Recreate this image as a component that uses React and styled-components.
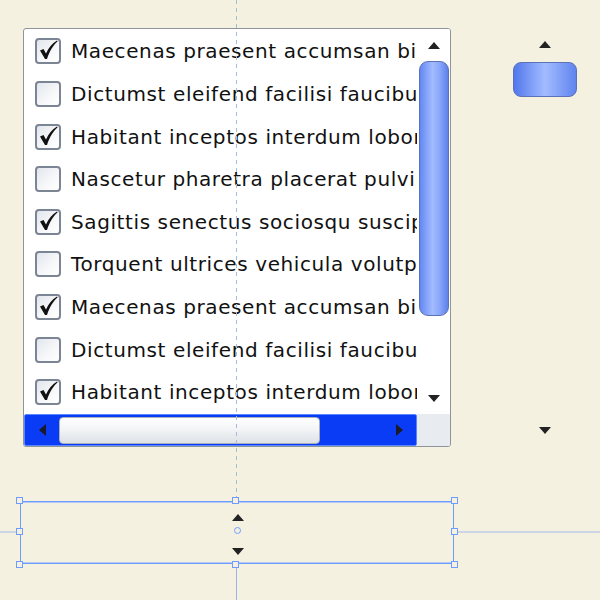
import styled, { createGlobalStyle } from "styled-components";

const GlobalStyle = createGlobalStyle`
  html, body {
    margin: 0;
    padding: 0;
    background: #f5f1e1;
  }
  * {
    box-sizing: border-box;
  }
`;

const items = [
  { label: "Maecenas praesent accumsan bibendum", checked: true },
  { label: "Dictumst eleifend facilisi faucibus", checked: false },
  { label: "Habitant inceptos interdum lobortis", checked: true },
  { label: "Nascetur pharetra placerat pulvinar", checked: false },
  { label: "Sagittis senectus sociosqu suscipit", checked: true },
  { label: "Torquent ultrices vehicula volutpat", checked: false },
  { label: "Maecenas praesent accumsan bibendum", checked: true },
  { label: "Dictumst eleifend facilisi faucibus", checked: false },
  { label: "Habitant inceptos interdum lobortis", checked: true },
];

const Check = () => (
  <svg width="22" height="22" viewBox="0 0 22 22">
    <path
      d="M3 11.5 L6.5 10 L9 14.5 C11.5 9 15 4.5 20 1.5 L20.5 2.5 C16 6.5 12.5 12 10 20 L8 20 Z"
      fill="#111"
    />
  </svg>
);

const App = () => {
  return (
    <Canvas>
      <GlobalStyle />
      <TopRow>
        <ListBox>
          <List>
            {items.map((item, i) => (
              <Row key={i}>
                <Box>{item.checked && <Check />}</Box>
                <Label>{item.label}</Label>
              </Row>
            ))}
          </List>
          <VScroll>
            <ArrowCell>
              <Arrow dir="up" />
            </ArrowCell>
            <VThumb />
            <Spacer />
            <ArrowCell>
              <Arrow dir="down" />
            </ArrowCell>
          </VScroll>
          <HScroll>
            <ArrowCell>
              <Arrow dir="left" />
            </ArrowCell>
            <HThumb />
            <Spacer />
            <ArrowCell>
              <Arrow dir="right" />
            </ArrowCell>
          </HScroll>
          <Corner />
        </ListBox>

        <LoneScroll>
          <ArrowCell>
            <Arrow dir="up" />
          </ArrowCell>
          <LoneThumb />
          <Spacer />
          <ArrowCell>
            <Arrow dir="down" />
          </ArrowCell>
        </LoneScroll>
      </TopRow>

      <Selection>
        <Handle pos="tl" />
        <Handle pos="tm" />
        <Handle pos="tr" />
        <Handle pos="ml" />
        <Handle pos="mr" />
        <Handle pos="bl" />
        <Handle pos="bm" />
        <Handle pos="br" />
        <Spinner>
          <Arrow dir="up" />
          <Pivot />
          <Arrow dir="down" />
        </Spinner>
      </Selection>

      <GuideDashed />
      <GuideBottom />
      <GuideLeft />
      <GuideRight />
    </Canvas>
  );
};
export default App;

const Canvas = styled.div`
  position: relative;
  width: 600px;
  height: 600px;
  overflow: hidden;
  background: #f5f1e1;
  font-family: "DejaVu Sans", Verdana, sans-serif;
`;

const TopRow = styled.div`
  display: flex;
  align-items: flex-start;
  padding: 28px 0 0 23px;
`;

const ListBox = styled.div`
  width: 428px;
  height: 419px;
  display: grid;
  grid-template-columns: 1fr 33px;
  grid-template-rows: 1fr 32px;
  background: #fff;
  border: 1px solid #8d949c;
  border-radius: 3px;
  overflow: hidden;
`;

const List = styled.div`
  overflow: hidden;
  padding-top: 1px;
`;

const Row = styled.div`
  height: 42.625px;
  display: flex;
  align-items: center;
  padding-left: 11px;
  gap: 10px;
  white-space: nowrap;
`;

const Box = styled.div`
  flex: none;
  width: 26px;
  height: 26px;
  border: 2px solid #7b8593;
  border-radius: 4px;
  background: linear-gradient(135deg, #e2e6ec 0%, #f7f8fa 60%, #ffffff 100%);
  display: flex;
  align-items: center;
  justify-content: center;
  svg {
    margin-top: -2px;
  }
`;

const Label = styled.span`
  font-size: 20px;
  color: #111;
  letter-spacing: 0.6px;
`;

const VScroll = styled.div`
  display: flex;
  flex-direction: column;
  align-items: center;
  background: #fff;
`;

const ArrowCell = styled.div`
  flex: none;
  width: 32px;
  height: 32px;
  display: flex;
  align-items: center;
  justify-content: center;
`;

const Spacer = styled.div`
  flex: 1;
`;

const VThumb = styled.div`
  flex: none;
  width: 30px;
  height: 255px;
  border-radius: 9px;
  border: 1px solid #5b72b8;
  background: linear-gradient(90deg, #6388f4 0%, #a3bcff 45%, #8aa7fb 70%, #5e80ea 100%);
`;

const HScroll = styled.div`
  display: flex;
  align-items: center;
  background: #0a3cf5;
  border: 1px solid #5a86ff;
  border-radius: 2px;
  padding: 0 0 0 1px;
  ${ArrowCell} {
    width: 33px;
  }
`;

const HThumb = styled.div`
  flex: none;
  width: 261px;
  height: 27px;
  border-radius: 4px;
  border: 1px solid #a9b0b8;
  background: linear-gradient(180deg, #ffffff 0%, #f1f3f5 50%, #dde1e6 100%);
`;

const Corner = styled.div`
  background: #e8ecf0;
`;

const arrowShapes = {
  up: "border-left: 6px solid transparent; border-right: 6px solid transparent; border-bottom: 7px solid #222;",
  down: "border-left: 6px solid transparent; border-right: 6px solid transparent; border-top: 7px solid #222;",
  left: "border-top: 6px solid transparent; border-bottom: 6px solid transparent; border-right: 7px solid #1a1a2a;",
  right: "border-top: 6px solid transparent; border-bottom: 6px solid transparent; border-left: 7px solid #1a1a2a;",
};

const Arrow = styled.div`
  flex: none;
  width: 0;
  height: 0;
  ${({ dir }) => arrowShapes[dir]}
`;

const LoneScroll = styled.div`
  width: 64px;
  height: 418px;
  margin-left: 62px;
  display: flex;
  flex-direction: column;
  align-items: center;
`;

const LoneThumb = styled.div`
  flex: none;
  width: 64px;
  height: 35px;
  margin-top: 2px;
  border-radius: 8px;
  border: 1px solid #5b72b8;
  background: linear-gradient(90deg, #5278ec 0%, #a3bcff 50%, #6084ef 100%);
`;

const Selection = styled.div`
  position: relative;
  width: 434px;
  height: 63px;
  margin: 54px 0 0 20px;
  box-shadow: inset 0 0 0 1px #6f9cff, inset 0 2px 0 0 #b3c8f2,
    inset 0 -2px 0 0 #b3c8f2;
  display: flex;
  justify-content: center;
`;

const handlePos = {
  tl: "left: -4px; top: -4px;",
  tm: "left: 212px; top: -4px;",
  tr: "right: -4px; top: -4px;",
  ml: "left: -4px; top: 27px;",
  mr: "right: -4px; top: 27px;",
  bl: "left: -4px; bottom: -4px;",
  bm: "left: 212px; bottom: -4px;",
  br: "right: -4px; bottom: -4px;",
};

const Handle = styled.div`
  position: absolute;
  width: 7px;
  height: 7px;
  border: 1px solid #6f9cff;
  background: #f5f1e1;
  z-index: 2;
  ${({ pos }) => handlePos[pos]}
`;

const Spinner = styled.div`
  display: flex;
  flex-direction: column;
  align-items: center;
  padding-top: 13px;
  margin-left: 1px;
  width: 14px;
`;

const Pivot = styled.div`
  flex: none;
  width: 7px;
  height: 7px;
  margin: 6px 0 14px;
  border: 1px solid #6f9cff;
  border-radius: 50%;
`;

const GuideDashed = styled.div`
  position: absolute;
  left: 236px;
  top: 0;
  width: 1px;
  height: 497px;
  background: repeating-linear-gradient(180deg, #a9b9d6 0 4px, transparent 4px 8px);
  z-index: 3;
`;

const GuideBottom = styled.div`
  position: absolute;
  left: 236px;
  top: 568px;
  width: 1px;
  height: 32px;
  background: #9cb4ec;
`;

const GuideLeft = styled.div`
  position: absolute;
  left: 0;
  top: 531px;
  width: 16px;
  height: 2px;
  background: #cdd6e6;
`;

const GuideRight = styled.div`
  position: absolute;
  left: 458px;
  top: 531px;
  width: 142px;
  height: 2px;
  background: #cdd6e6;
`;
